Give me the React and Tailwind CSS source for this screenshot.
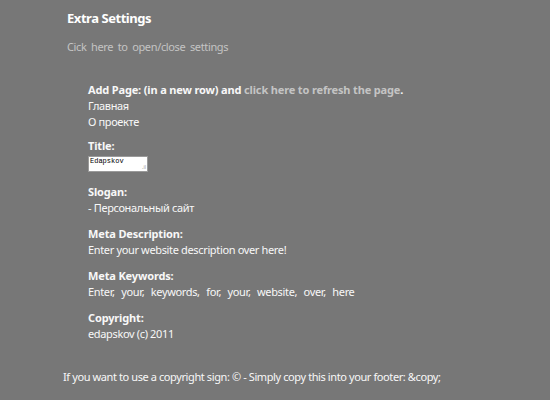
export default function App() {
  const f = { fontFamily: '"Noto Sans", "DejaVu Sans", sans-serif' };
  return (
    <div className="w-[550px] h-[400px] bg-[#777777] text-[#f8f8f8] text-[11px] leading-[16px] tracking-[-0.35px] overflow-hidden" style={f}>
      <div className="pl-[67px] pt-[9px]">
        <h1 className="font-bold text-[13px] leading-[18px] tracking-[-0.45px] text-white">Extra Settings</h1>
        <div className="mt-[12px] text-[#c4c4c4] [word-spacing:2px]">Cick here to open/close settings</div>
      </div>
      <div className="pl-[88px] mt-[27px]">
        <div className="font-bold tracking-[-0.15px]"><span>Add Page: (in a new row) and </span><span className="text-[#c4c4c4]">click here to refresh the page</span><span>.</span></div>
        <div>Главная</div>
        <div>О проекте</div>
        <div className="font-bold tracking-[-0.15px] mt-[8px]">Title:</div>
        <div className="relative w-[60px] h-[16px] bg-white border border-[#9a9a9a] mt-[2px] tracking-normal">
          <span className="absolute left-[1px] top-[0px] text-[7px] leading-[9px] text-black" style={{ fontFamily: '"Liberation Mono", monospace' }}>Edapskov</span>
          <span className="absolute right-[1px] bottom-[1px] text-[5px] leading-[5px] text-[#999]">.il</span>
        </div>
        <div className="font-bold tracking-[-0.15px] mt-[12px]">Slogan:</div>
        <div>- Персональный сайт</div>
        <div className="font-bold tracking-[-0.15px] mt-[10px]">Meta Description:</div>
        <div>Enter your website description over here!</div>
        <div className="font-bold tracking-[-0.15px] mt-[10px]">Meta Keywords:</div>
        <div className="[word-spacing:4px]">Enter, your, keywords, for, your, website, over, here</div>
        <div className="font-bold tracking-[-0.15px] mt-[10px]">Copyright:</div>
        <div>edapskov (c) 2011</div>
      </div>
      <div className="pl-[63px] mt-[27px] tracking-[-0.4px]">If you want to use a copyright sign: © - Simply copy this into your footer: &amp;copy;</div>
    </div>
  );
}
